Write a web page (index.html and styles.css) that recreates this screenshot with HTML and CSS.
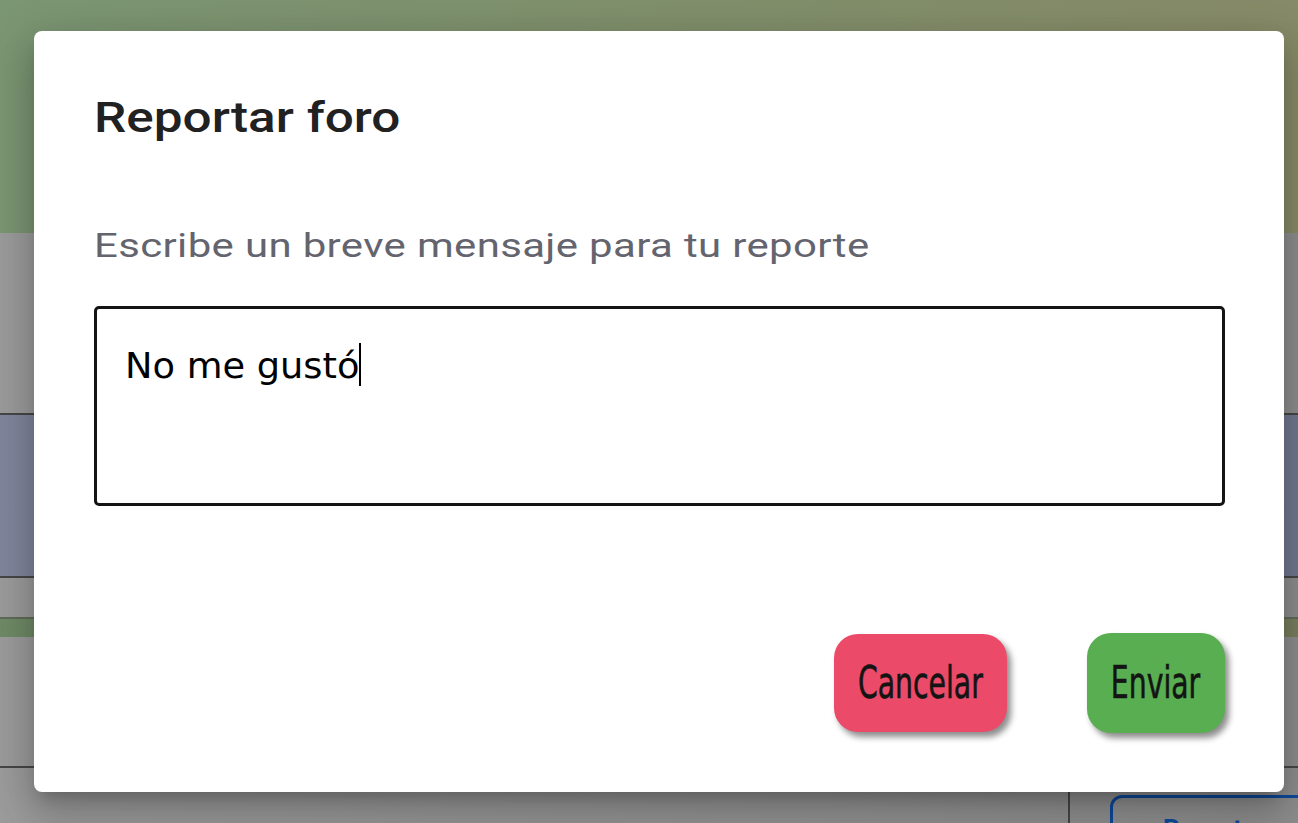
FILE: index.html
```html
<!DOCTYPE html>
<html lang="es">
<head>
<meta charset="utf-8">
<title>Reportar foro</title>
<link rel="stylesheet" href="styles.css">
</head>
<body>
<div class="page">
  <div class="band band-hero"></div>
  <div class="band band-gray band-a"></div>
  <div class="rule"></div>
  <div class="band band-blue"></div>
  <div class="rule"></div>
  <div class="band band-gray band-b"></div>
  <div class="band band-green"></div>
  <div class="band band-gray band-c"></div>
  <div class="rule"></div>
  <div class="band band-gray band-d">
    <div class="divider"></div>
    <div class="outline-btn"><span class="outline-text">Reportar</span></div>
  </div>
</div>

<div class="modal" role="dialog" aria-labelledby="dlg-title">
  <h2 class="modal-title" id="dlg-title"><span class="wide wide-title">Reportar foro</span></h2>
  <p class="modal-label"><span class="wide wide-label">Escribe un breve mensaje para tu reporte</span></p>
  <div class="field"><span class="field-text">No me gustó</span><span class="caret"></span></div>
  <div class="actions">
    <button class="btn btn-cancel"><span class="btn-text">Cancelar</span></button>
    <button class="btn btn-send"><span class="btn-text">Enviar</span></button>
  </div>
</div>
</body>
</html>
```

FILE: styles.css
```css
* { box-sizing: border-box; }

html, body {
  margin: 0;
  padding: 0;
  width: 1298px;
  height: 823px;
  overflow: hidden;
  background: #9c9c9c;
  font-family: "Roboto", "Liberation Sans", sans-serif;
}

.page {
  display: flex;
  flex-direction: column;
  width: 1298px;
  height: 823px;
}

.band { width: 100%; flex: none; }

.band-hero {
  height: 233px;
  background: linear-gradient(90deg, #7b9673 0%, #80906c 50%, #888b68 100%);
}

.band-gray {
  background: linear-gradient(90deg, #9c9c9c 0%, #949494 60%, #8e8e8e 100%);
}

.band-a { height: 180px; }
.band-b { height: 39px; }
.band-c { height: 129px; }
.band-d {
  flex: 1;
  display: flex;
  padding-left: 1068px;
  gap: 40px;
  padding-top: 27px;
  overflow: hidden;
}

.rule {
  height: 2px;
  background: #474747;
  flex: none;
}

.band-blue {
  height: 161px;
  background: linear-gradient(90deg, #80879d 0%, #767e95 60%, #717990 100%);
}

.band-green {
  height: 20px;
  border-top: 2px solid #5f6c57;
  background: linear-gradient(90deg, #6f8b67 0%, #758661 60%, #7a7f5f 100%);
}

.divider {
  width: 2px;
  margin-top: -27px;
  background: #474747;
  flex: none;
}

.outline-btn {
  width: 260px;
  height: 60px;
  border: 3px solid #0d4a9c;
  border-radius: 12px;
  flex: none;
  overflow: hidden;
  padding: 16px 0 0 50px;
}

.outline-text {
  display: block;
  color: #0d4a9c;
  font-weight: 700;
  font-size: 26px;
  line-height: 30px;
}

.modal {
  position: absolute;
  left: 34px;
  top: 31px;
  width: 1250px;
  height: 761px;
  background: #fff;
  border-radius: 8px;
  padding: 62px 59px 59px 60px;
  display: flex;
  flex-direction: column;
  box-shadow: 0 11px 15px -7px rgba(0,0,0,0.2),
              0 24px 38px 3px rgba(0,0,0,0.14),
              0 9px 46px 8px rgba(0,0,0,0.12);
}

.wide {
  display: inline-block;
  transform-origin: 0 50%;
  white-space: nowrap;
}

.wide-title { transform: scaleX(1.221); }
.wide-label { transform: scaleX(1.233); }

.modal-title {
  margin: 0;
  font-family: "Roboto", sans-serif;
  font-weight: 500;
  font-size: 42px;
  line-height: 50px;
  color: #212121;
}

.modal-label {
  margin: 82px 0 0;
  font-family: "Roboto", sans-serif;
  font-weight: 400;
  font-size: 34px;
  line-height: 40px;
  letter-spacing: 0.3px;
  color: #64646f;
}

.field {
  margin-top: 41px;
  width: 1131px;
  height: 200px;
  border: 3px solid #141414;
  border-radius: 5px;
  padding: 36px 28px 0;
  display: flex;
  align-items: flex-start;
  font-family: "DejaVu Sans", sans-serif;
  font-size: 35px;
  line-height: 42px;
  color: #000;
}

.field-text {
  display: inline-block;
  white-space: pre;
  transform: scaleX(1.05);
  transform-origin: 0 50%;
  margin-right: 11px;
}

.caret {
  width: 2px;
  height: 43px;
  background: #000;
  margin-top: -2px;
}

.actions {
  margin-top: auto;
  display: flex;
  justify-content: flex-end;
  align-items: center;
  gap: 80px;
}

.btn {
  border: none;
  border-radius: 24px;
  font-family: "Liberation Sans Narrow", "DejaVu Sans Condensed", sans-serif;
  font-stretch: condensed;
  font-size: 44px;
  color: #141414;
  display: flex;
  align-items: center;
  justify-content: center;
  padding: 0;
  box-shadow: 4px 5px 6px rgba(0,0,0,0.45);
}

.btn-text {
  display: inline-block;
  transform: scaleX(0.715);
  line-height: 1;
  -webkit-text-stroke: 0.6px #141414;
}

.btn-cancel {
  width: 173px;
  height: 98px;
  background: #eb4b69;
}

.btn-send {
  width: 138px;
  height: 100px;
  background: #58ae50;
}
```
